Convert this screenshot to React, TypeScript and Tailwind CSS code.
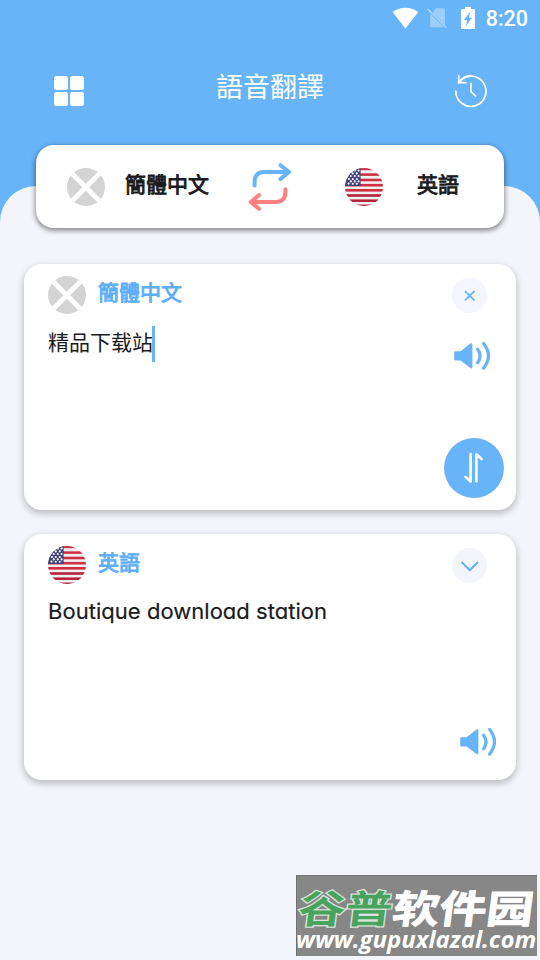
type IconProps = { className?: string };

const stripes = [-0.4, 5.3, 10.7, 15.9, 21, 26.2, 31.4, 36.5];
const stars = [
  [10, 2.6], [13.6, 2.6],
  [7.8, 5.4], [11.8, 5.4],
  [5.8, 8], [9.8, 8], [13.6, 8],
  [4, 11], [7.8, 11], [11.8, 11],
  [5.8, 13.4], [9.8, 13.4], [13.6, 13.4],
  [3.6, 15.6], [7.8, 15.8], [11.8, 15.8],
];

function UsFlag() {
  return (
    <div className="size-[38px] shrink-0 overflow-hidden rounded-full bg-[#f0f0f0]">
      <svg viewBox="0 0 38 38" className="size-full">
        {stripes.map((y) => (
          <rect key={y} x="0" y={y} width="38" height="2.6" fill={y > 25 ? "#b5243c" : "#d22f45"} />
        ))}
        <rect width="15.6" height="18" fill="#41447a" />
        {stars.map(([x, y]) => (
          <circle key={`${x}-${y}`} cx={x} cy={y} r="1.05" fill="#fff" />
        ))}
      </svg>
    </div>
  );
}

function NoFlag() {
  return (
    <div className="size-[38px] shrink-0 overflow-hidden rounded-full bg-[#d4d4d4]">
      <svg viewBox="0 0 38 38" className="size-full">
        <path d="M5 5.5 32.5 33M32.5 5.5 5 33" stroke="#fff" strokeWidth="4.8" />
      </svg>
    </div>
  );
}

function Speaker({ className }: IconProps) {
  return (
    <svg viewBox="0 0 38 30" className={className} fill="none" stroke="#68b4f8" strokeWidth="3.2" strokeLinecap="round">
      <path
        d="M1.6 10.2H6.6L16.4 2.6Q18.4 1.6 18.4 3.6V26Q18.4 28.2 16.4 27L6.6 19.6H1.6Q.2 19.6.2 18.2V11.6Q.2 10.2 1.6 10.2Z"
        fill="#68b4f8"
        stroke="none"
      />
      <path d="M23.6 8.2Q28.6 14.8 23.6 21.7" />
      <path d="M29.6 2.4Q39.4 14.8 29.6 27.2" />
    </svg>
  );
}

function StatusBar() {
  return (
    <div className="flex h-9 shrink-0 items-center pr-3 pl-[392px] text-white">
      <svg viewBox="0 0 27 22" className="h-[22px] w-[27px]" fill="#fff">
        <path d="M13.5 21.5.6 5C8.2-.8 18.8-.8 26.4 5Z" />
      </svg>
      <svg viewBox="0 0 22 22" className="ml-2 h-[22px] w-[22px]">
        <path d="M8.5 1.2H16.4Q18 1.2 18 2.8V18L6.2 6ZM3.2 6.5 17 20.4H4.8Q3.2 20.4 3.2 18.8Z" fill="#fff" opacity=".35" />
        <path d="M1 2.2 19.4 20.8" stroke="#fff" strokeWidth="1.6" opacity=".45" />
      </svg>
      <svg viewBox="0 0 14 22" className="ml-3 h-[22px] w-[14px]">
        <path d="M4 0H10V2H13Q14 2 14 3V21Q14 22 13 22H1Q0 22 0 21V3Q0 2 1 2H4Z" fill="#fff" />
        <path d="M9.2 4.6 3 13H6.2L5 19.2 11 10.7H7.9Z" fill="#68b4f8" />
      </svg>
      <span className="mt-px ml-[11px] font-['Roboto',sans-serif] text-[21.5px] leading-6 font-medium">8:20</span>
    </div>
  );
}

function AppBar() {
  return (
    <div className="flex h-[109px] shrink-0 justify-between pr-[52px] pl-[54px]">
      <div className="mt-[40px] grid h-[30px] w-[30px] grid-cols-2 gap-[2.5px]">
        <div className="rounded-[2.5px] bg-white" />
        <div className="rounded-[2.5px] bg-white" />
        <div className="rounded-[2.5px] bg-white" />
        <div className="rounded-[2.5px] bg-white" />
      </div>
      <h1 className="mt-[30px] ml-[2px] text-[27px] leading-10 font-normal text-white">語音翻譯</h1>
      <svg
        viewBox="0 0 34 34"
        className="mt-[38px] size-[34px]"
        fill="none"
        stroke="#fff"
        strokeWidth="1.7"
        strokeLinecap="round"
        strokeLinejoin="round"
      >
        <path d="M1.8 17.2A15.1 15.1 0 1 0 4.6 8.5" />
        <path d="M4.7 1.8V8.7H11.7" />
        <path d="M4.7 8.7Q10.2 1.7 17 1.7" />
        <path d="M17 9.6V17.6L21.5 22" />
      </svg>
    </div>
  );
}

function LanguageBar() {
  return (
    <div className="z-10 mx-9 flex h-[83px] shrink-0 items-center rounded-[18px] bg-white pl-[31px] text-[21px] leading-8 text-[#1b1b1d] shadow-[0_2px_5px_1px_rgba(0,0,0,0.42)]">
      <NoFlag />
      <span className="mb-[8px] ml-[20px] w-[84px] [-webkit-text-stroke:0.9px_#1b1b1d]">簡體中文</span>
      <svg viewBox="0 0 44 48" className="ml-[39px] h-12 w-11" fill="none" strokeWidth="4" strokeLinecap="round" strokeLinejoin="round">
        <g stroke="#68b4f8">
          <path d="M6.6 22.5V19Q6.6 9 16.6 9H40" />
          <path d="M32.5 2.2 41 9 32.5 16" />
        </g>
        <g stroke="#ff8080">
          <path d="M37.4 26.2V29Q37.4 39 27.4 39H4" />
          <path d="M11 32 2.8 39 11 45.8" />
        </g>
      </svg>
      <div className="ml-[53px]">
        <UsFlag />
      </div>
      <span className="mb-[8px] ml-[34px] [-webkit-text-stroke:0.9px_#1b1b1d]">英語</span>
    </div>
  );
}

function SourceCard() {
  return (
    <div className="flex h-[246px] shrink-0 justify-between rounded-[18px] bg-white pt-3 pr-3 pl-6 shadow-[0_3px_6px_1px_rgba(0,0,0,0.22)]">
      <div>
        <div className="flex h-[38px] items-center gap-3">
          <NoFlag />
          <span className="mb-[8px] text-[21px] leading-8 text-[#5eaef8] [-webkit-text-stroke:0.9px_#5eaef8]">簡體中文</span>
        </div>
        <div className="mt-[12px] flex">
          <span className="-mt-px text-[21px] leading-8 text-[#1b1b1d]">精品下载站</span>
          <span className="-ml-px h-9 w-[3px] bg-[#68b4f8]" />
        </div>
      </div>
      <div className="flex w-[60px] flex-col items-end">
        <div className="mt-[2px] mr-[17px] flex size-[35px] items-center justify-center rounded-full bg-[#f4f5fd]">
          <svg viewBox="0 0 12 12" className="size-3" stroke="#68b4f8" strokeWidth="1.9" strokeLinecap="round">
            <path d="M1.6 1.6 9.8 9.8M9.8 1.6 1.6 9.8" />
          </svg>
        </div>
        <Speaker className="mt-[28px] mr-[12px] h-[30px] w-[38px]" />
        <div className="mt-[67px] flex size-[60px] items-center justify-center rounded-full bg-[#68b4f8]">
          <svg viewBox="0 0 20 32" className="h-8 w-5" fill="none" strokeLinecap="round" strokeLinejoin="round">
            <path d="M6.6 2V29.4L1.6 25" stroke="#fff" strokeWidth="2.6" />
            <path d="M12.4 29.4V2.2L17.6 7" stroke="#fff" strokeWidth="2.6" />
            <path d="M5.6 3V26M13.4 7V28" stroke="#d5e9fc" strokeWidth="1" />
          </svg>
        </div>
      </div>
    </div>
  );
}

function ResultCard() {
  return (
    <div className="mt-6 flex h-[246px] shrink-0 justify-between rounded-[18px] bg-white pt-3 pr-3 pl-6 shadow-[0_3px_6px_1px_rgba(0,0,0,0.22)]">
      <div>
        <div className="flex h-[38px] items-center gap-3">
          <UsFlag />
          <span className="mb-[8px] text-[21px] leading-8 text-[#5eaef8] [-webkit-text-stroke:0.9px_#5eaef8]">英語</span>
        </div>
        <p className="mt-[11px] font-['Inter',sans-serif] text-[22px] leading-8 tracking-[0.03px] whitespace-nowrap text-[#1b1b1d] [font-feature-settings:'cv11'] [-webkit-text-stroke:0.2px_#1b1b1d]">
          Boutique download station
        </p>
      </div>
      <div className="flex w-[60px] flex-col items-end">
        <div className="mt-[2px] mr-[17px] flex size-[35px] items-center justify-center rounded-full bg-[#f4f5fa]">
          <svg viewBox="0 0 18 12" className="h-3 w-[18px]" fill="none" stroke="#60aff8" strokeWidth="2" strokeLinecap="round" strokeLinejoin="round">
            <path d="M1.2 2.6 8.8 10.2 16.4 2.6" />
          </svg>
        </div>
        <Speaker className="mt-[144px] mr-[6px] h-[30px] w-[38px]" />
      </div>
    </div>
  );
}

function Watermark() {
  return (
    <div className="absolute top-[875px] left-[296px] h-[81px] w-[241px] border-t border-l border-[#707070] bg-[#868786] whitespace-nowrap text-white">
      <div className="mt-[8px] ml-[2px] flex h-[46px] origin-left -skew-x-6 scale-y-[0.82] items-center text-[47px] leading-[46px] font-bold">
        <span className="text-[#48a35f] [-webkit-text-stroke:3px_#d9e3da] [paint-order:stroke_fill]">谷普</span>
        <span className="[-webkit-text-stroke:1px_white]">软件园</span>
      </div>
      <div className="-mt-[6px] -ml-px font-['Open_Sans',sans-serif] text-[24px] leading-[30px] font-bold tracking-[-0.02px] italic">
        www.gupuxlazal.com
      </div>
    </div>
  );
}

export default function App() {
  return (
    <div className="relative flex h-[960px] w-[540px] flex-col overflow-hidden bg-[#68b4f8] font-['Noto_Sans_CJK_SC',sans-serif]">
      <StatusBar />
      <AppBar />
      <LanguageBar />
      <main className="-mt-[42px] flex flex-1 flex-col rounded-t-[36px] bg-[#f4f5fa] px-6 pt-[78px]">
        <SourceCard />
        <ResultCard />
      </main>
      <Watermark />
    </div>
  );
}
